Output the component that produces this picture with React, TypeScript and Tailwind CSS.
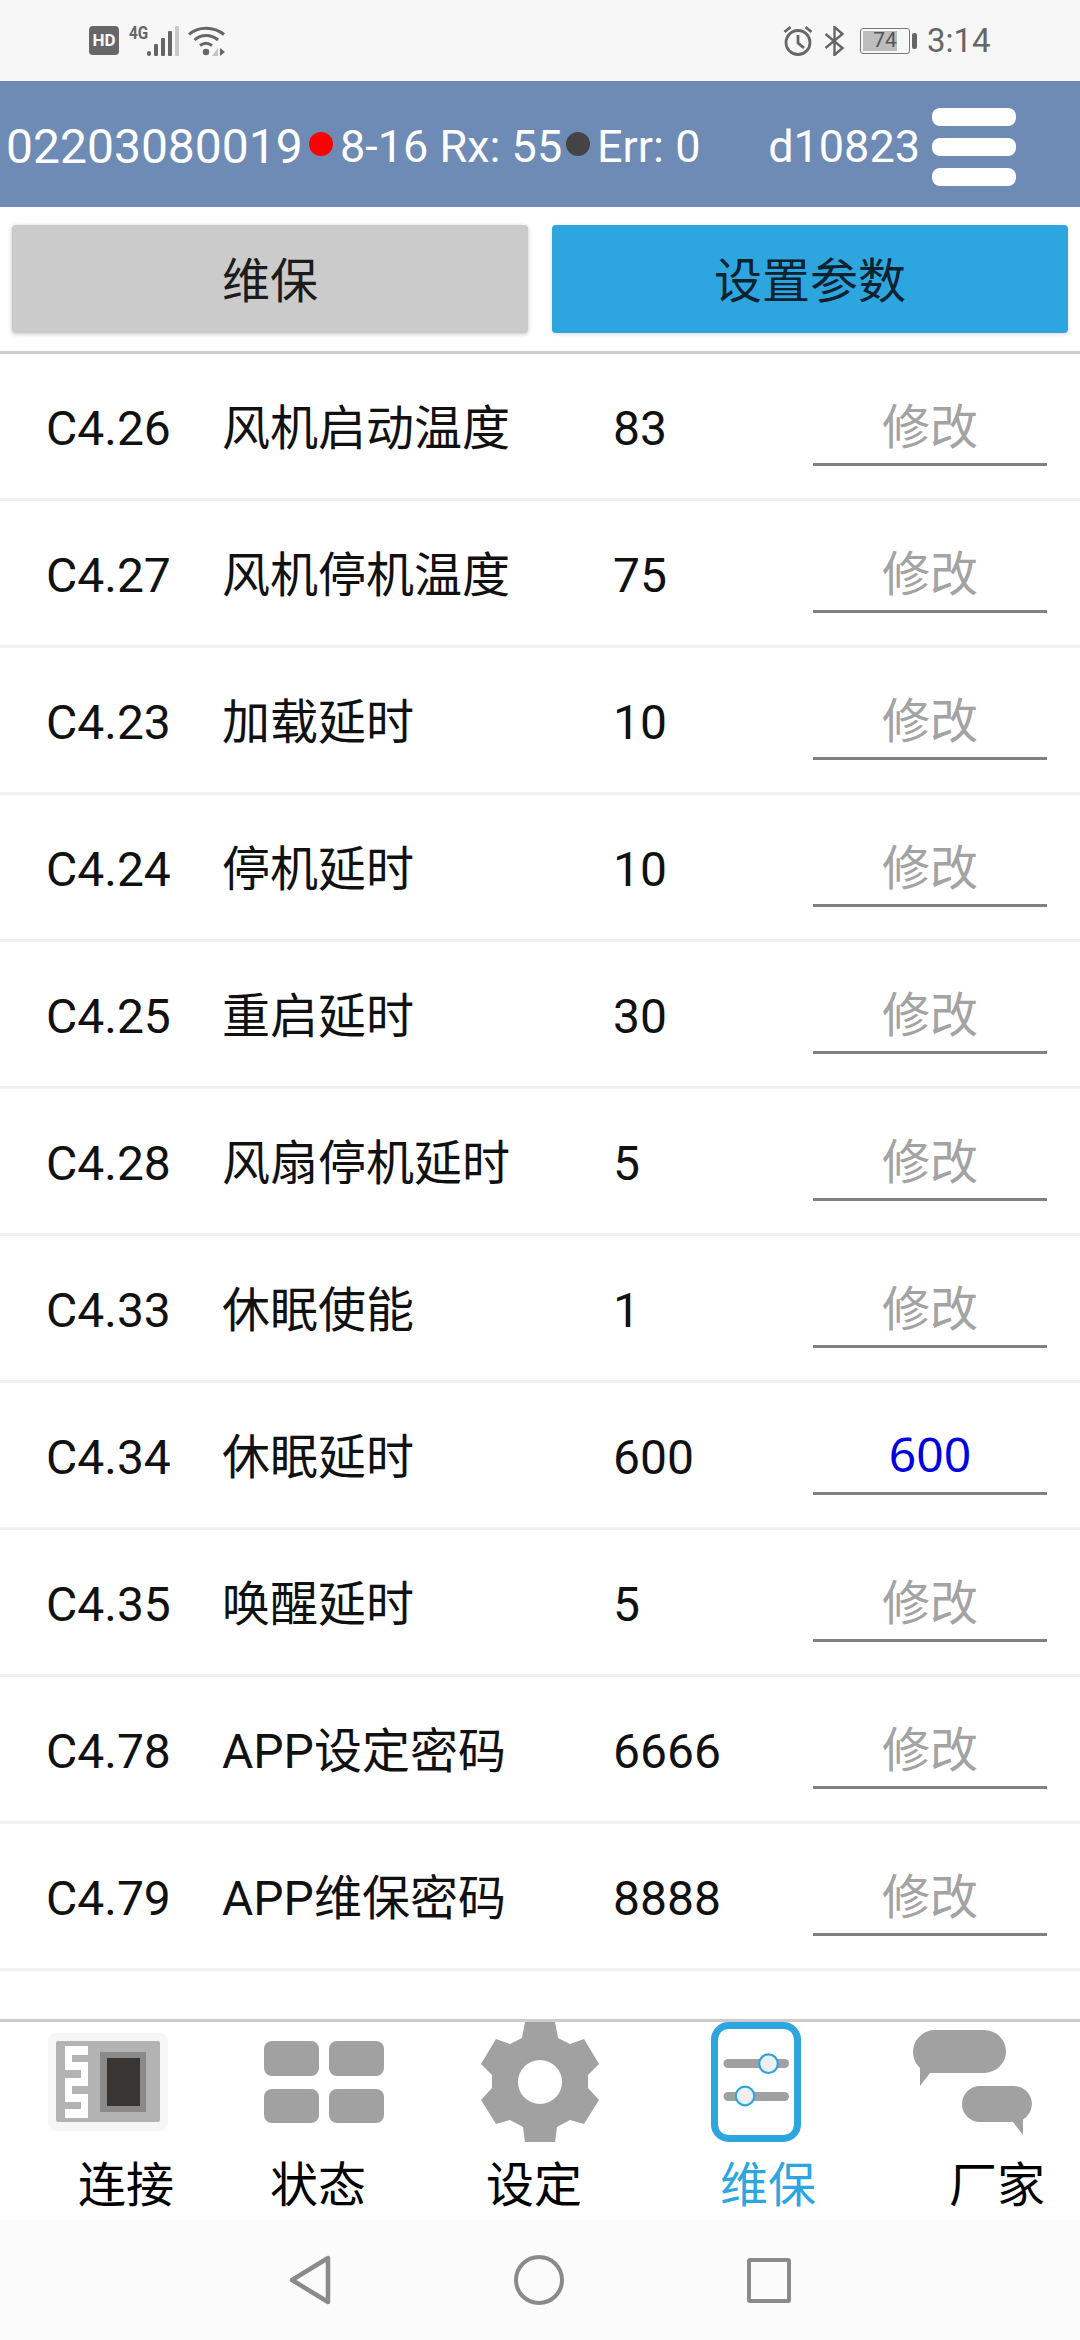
import type { ReactNode } from "react"

const rows = [
  { code: "C4.26", name: "风机启动温度", value: "83" },
  { code: "C4.27", name: "风机停机温度", value: "75" },
  { code: "C4.23", name: "加载延时", value: "10" },
  { code: "C4.24", name: "停机延时", value: "10" },
  { code: "C4.25", name: "重启延时", value: "30" },
  { code: "C4.28", name: "风扇停机延时", value: "5" },
  { code: "C4.33", name: "休眠使能", value: "1" },
  { code: "C4.34", name: "休眠延时", value: "600", input: "600" },
  { code: "C4.35", name: "唤醒延时", value: "5" },
  { code: "C4.78", name: "APP设定密码", value: "6666" },
  { code: "C4.79", name: "APP维保密码", value: "8888" },
]

const font = "font-['Roboto','Noto_Sans_CJK_SC',sans-serif]"

function StatusBar() {
  return (
    <div className="h-[81px] bg-[#f7f7f7] flex items-center pl-[89px] pr-[90px] text-[#666666]">
      <div className="w-[30px] h-[29px] rounded-[4px] bg-[#666666] text-[#f7f7f7] text-[17px] font-bold flex items-center justify-center leading-none">
        HD
      </div>
      <div className="relative ml-[10px] w-[50px] h-[30px]">
        <span className="absolute left-0 -top-[2px] text-[18px] leading-[18px] font-bold origin-left scale-x-[0.85]">4G</span>
        <svg width="50" height="30" viewBox="0 0 50 30">
          <rect x="18" y="25" width="4" height="5" rx="2" fill="#666666" />
          <rect x="25" y="18" width="4" height="12" rx="1" fill="#666666" />
          <rect x="32" y="12" width="4" height="18" rx="1" fill="#666666" />
          <rect x="39" y="5" width="4" height="25" rx="1" fill="#666666" />
          <rect x="46" y="0" width="4" height="30" rx="1" fill="#c8c8c8" />
        </svg>
      </div>
      <svg width="37" height="30" viewBox="0 0 37 30" className="ml-[9px]">
        <path d="M1 8.5C10 0 26 0 36 8.5" fill="none" stroke="#666666" strokeWidth="3" />
        <path d="M6.5 14C13 8 23 8 30 14" fill="none" stroke="#666666" strokeWidth="3" />
        <path d="M12 19.5C16 16.5 20 16.5 24 19.5" fill="none" stroke="#666666" strokeWidth="3" />
        <circle cx="18" cy="26" r="3.2" fill="#666666" />
        <path d="M32 22v8l5-4z" fill="#666666" />
        <path d="M30 22v8h-6z" fill="#c4c4c4" />
      </svg>
      <div className="flex-1" />
      <svg width="30" height="30" viewBox="0 0 30 30">
        <circle cx="15" cy="16.5" r="12" fill="none" stroke="#666666" strokeWidth="2.8" />
        <path d="M15 9v8l6 5" fill="none" stroke="#666666" strokeWidth="2.8" />
        <path d="M1.5 6l6-5M28.5 6l-6-5" fill="none" stroke="#666666" strokeWidth="2.6" />
      </svg>
      <svg width="21" height="30" viewBox="0 0 21 30" className="ml-[11px] mt-[1px]">
        <path d="M1.5 8l17 14-8 7V1l8 7-17 14" fill="none" stroke="#666666" strokeWidth="2.4" />
      </svg>
      <div className="ml-[15px] flex items-center">
        <div className="w-[50px] h-[26px] rounded-[3px] border border-[#777777] p-[2px] relative">
          <div className="w-[34px] h-full bg-[#bdbdbd]" />
          <span className="absolute inset-0 flex items-center justify-center text-[21px] leading-none text-[#555555]">
            74
          </span>
        </div>
        <div className="ml-[2px] w-[5px] h-[16px] rounded-[2px] bg-[#666666]" />
      </div>
      <span className="ml-[10px] w-[63px] text-[33px] leading-none whitespace-nowrap">3:14</span>
    </div>
  )
}

function Header() {
  return (
    <div className="h-[126px] bg-[#6e8bb5] flex items-center text-white text-[45px] whitespace-nowrap">
      <span className="ml-[6px] mt-[5px] w-[303px] shrink-0 text-[48px]">02203080019</span>
      <span className="w-[24px] h-[24px] rounded-full bg-[#ff0000] shrink-0" />
      <span className="ml-[7px] mt-[5px] w-[226px] shrink-0">8-16 Rx: 55</span>
      <span className="w-[24px] h-[24px] rounded-full bg-[#444444] shrink-0" />
      <span className="ml-[7px] mt-[5px] shrink-0">Err: 0</span>
      <span className="ml-auto mt-[5px]">d10823</span>
      <div className="ml-[12px] mr-[64px] mt-[6px] flex flex-col gap-[12px] shrink-0">
        <div className="w-[84px] h-[18px] rounded-[8px] bg-white" />
        <div className="w-[84px] h-[18px] rounded-[8px] bg-white" />
        <div className="w-[84px] h-[18px] rounded-[8px] bg-white" />
      </div>
    </div>
  )
}

function Tabs() {
  return (
    <div className="h-[147px] px-[12px] pt-[18px] flex gap-[24px] border-b-[3px] border-[#cccccc] text-[48px] leading-none text-[#1c1c1c]">
      <div className="flex-1 h-[108px] pt-[6px] rounded-[4px] bg-[#cbcbcb] shadow-[0_1px_4px_rgba(0,0,0,0.25)] flex items-center justify-center">
        维保
      </div>
      <div className="flex-1 h-[108px] pt-[6px] rounded-[4px] bg-[#2da6e0] text-[#0c2230] shadow-[0_1px_4px_rgba(0,0,0,0.15)] flex items-center justify-center">
        设置参数
      </div>
    </div>
  )
}

function Row({ code, name, value, input }: { code: string; name: string; value: string; input?: string }) {
  return (
    <div className="h-[147px] pt-[6px] flex items-center border-b-[3px] border-[#f0f0f0] text-[48px] text-[#111111] shrink-0">
      <span className="w-[222px] pl-[46px] shrink-0">{code}</span>
      <span className="w-[391px] shrink-0">{name}</span>
      <span className="w-[200px] shrink-0">{value}</span>
      <div
        className={`w-[234px] h-[70px] mt-[4px] border-b-[3px] border-[#808080] flex items-center justify-center ${
          input ? "pb-[10px] text-[#0000e0] font-['Noto_Sans',sans-serif]" : "pb-[3px] text-[#a3a3a3]"
        }`}
      >
        {input ?? "修改"}
      </div>
    </div>
  )
}

function ChipIcon() {
  return (
    <svg width="120" height="98" viewBox="0 0 120 98">
      <rect width="120" height="98" rx="8" fill="#f5f6f5" />
      <rect x="8" y="8" width="104" height="81" rx="2" fill="#b2b3b2" />
      <path d="M17 13H40V22H24V29H40V53H24V61H40V85H17V76H33V69H17V45H33V37H17Z" fill="#ffffff" />
      <rect x="52" y="19" width="46" height="60" fill="#8a8a8a" />
      <rect x="59" y="25" width="33" height="48" fill="#393533" />
    </svg>
  )
}

function GridIcon() {
  return (
    <div className="w-[120px] h-[82px] grid grid-cols-2 gap-x-[10px] gap-y-[13px]">
      <div className="rounded-[8px] bg-[#a0a1a0]" />
      <div className="rounded-[8px] bg-[#a0a1a0]" />
      <div className="rounded-[8px] bg-[#a0a1a0]" />
      <div className="rounded-[8px] bg-[#a0a1a0]" />
    </div>
  )
}

function GearIcon() {
  return (
    <svg width="118" height="120" viewBox="0 0 118 120">
      <path
        fillRule="evenodd"
        fill="#a0a1a0"
        d="M44 0H74L77 16L89 22L103 17L118 42L107 53V66L118 78L103 102L89 98L76 105L74 120H44L42 105L29 98L15 102L0 78L11 66V53L0 42L15 17L29 22L41 16ZM37 60a22 22 0 1 0 44 0a22 22 0 1 0 -44 0z"
      />
    </svg>
  )
}

function SlidersIcon() {
  return (
    <svg width="90" height="120" viewBox="0 0 90 120">
      <rect x="3.5" y="3.5" width="83" height="113" rx="14" fill="#fff" stroke="#2da6e0" strokeWidth="7" />
      <rect x="12.5" y="37" width="65.5" height="9" rx="4.5" fill="#a0a1a0" />
      <rect x="12.5" y="70" width="65.5" height="9" rx="4.5" fill="#a0a1a0" />
      <circle cx="57.5" cy="41.7" r="9.3" fill="#eeeeee" stroke="#2da6e0" strokeWidth="2.2" />
      <circle cx="34" cy="74" r="9.3" fill="#eeeeee" stroke="#2da6e0" strokeWidth="2.2" />
    </svg>
  )
}

function ChatIcon() {
  return (
    <svg width="120" height="105" viewBox="0 0 120 105">
      <path fill="#a0a1a0" d="M22 0h50a22 21.5 0 0 1 0 43H18L8 56V38A22 22 0 0 1 22 0z" />
      <path fill="#a0a1a0" d="M68 56h34a18 18 0 0 1 9 33.5V105L101 92H68a18 18 0 0 1 0-36z" />
    </svg>
  )
}

function TabItem({ icon, label, active, shift }: { icon: ReactNode; label: string; active?: boolean; shift: string }) {
  return (
    <div className="w-[216px] flex flex-col items-center">
      <div className="h-[120px] flex items-center justify-center">{icon}</div>
      <span className={`mt-[15px] text-[48px] leading-[57px] ${shift} ${active ? "text-[#2da6e0]" : "text-black"}`}>
        {label}
      </span>
    </div>
  )
}

function BottomTabs() {
  return (
    <div className="h-[201px] border-t-[3px] border-[#cccccc] bg-white flex shrink-0">
      <TabItem shift="translate-x-[18px]" label="连接" icon={<ChipIcon />} />
      <TabItem shift="-translate-x-[6px]" label="状态" icon={<GridIcon />} />
      <TabItem shift="-translate-x-[6px]" label="设定" icon={<GearIcon />} />
      <TabItem shift="translate-x-[12px]" label="维保" active icon={<SlidersIcon />} />
      <TabItem shift="translate-x-[25px]" label="厂家" icon={<ChatIcon />} />
    </div>
  )
}

function NavBar() {
  return (
    <div className="h-[120px] bg-[#fbfbfb] flex items-center justify-center gap-[183px] shrink-0">
      <svg width="42" height="50" viewBox="0 0 42 50">
        <path d="M39 3v44L3 25z" fill="none" stroke="#8a8a8a" strokeWidth="4.5" strokeLinejoin="round" />
      </svg>
      <div className="w-[50px] h-[50px] rounded-full border-[4px] border-[#8a8a8a]" />
      <div className="w-[44px] h-[45px] rounded-[3px] border-[4px] border-[#8a8a8a]" />
    </div>
  )
}

export default function App() {
  return (
    <div className={`w-[1080px] h-[2340px] bg-white flex flex-col overflow-hidden ${font}`}>
      <StatusBar />
      <Header />
      <Tabs />
      <div className="flex-1 overflow-hidden flex flex-col">
        {rows.map((row) => (
          <Row key={row.code} {...row} />
        ))}
      </div>
      <BottomTabs />
      <NavBar />
    </div>
  )
}
